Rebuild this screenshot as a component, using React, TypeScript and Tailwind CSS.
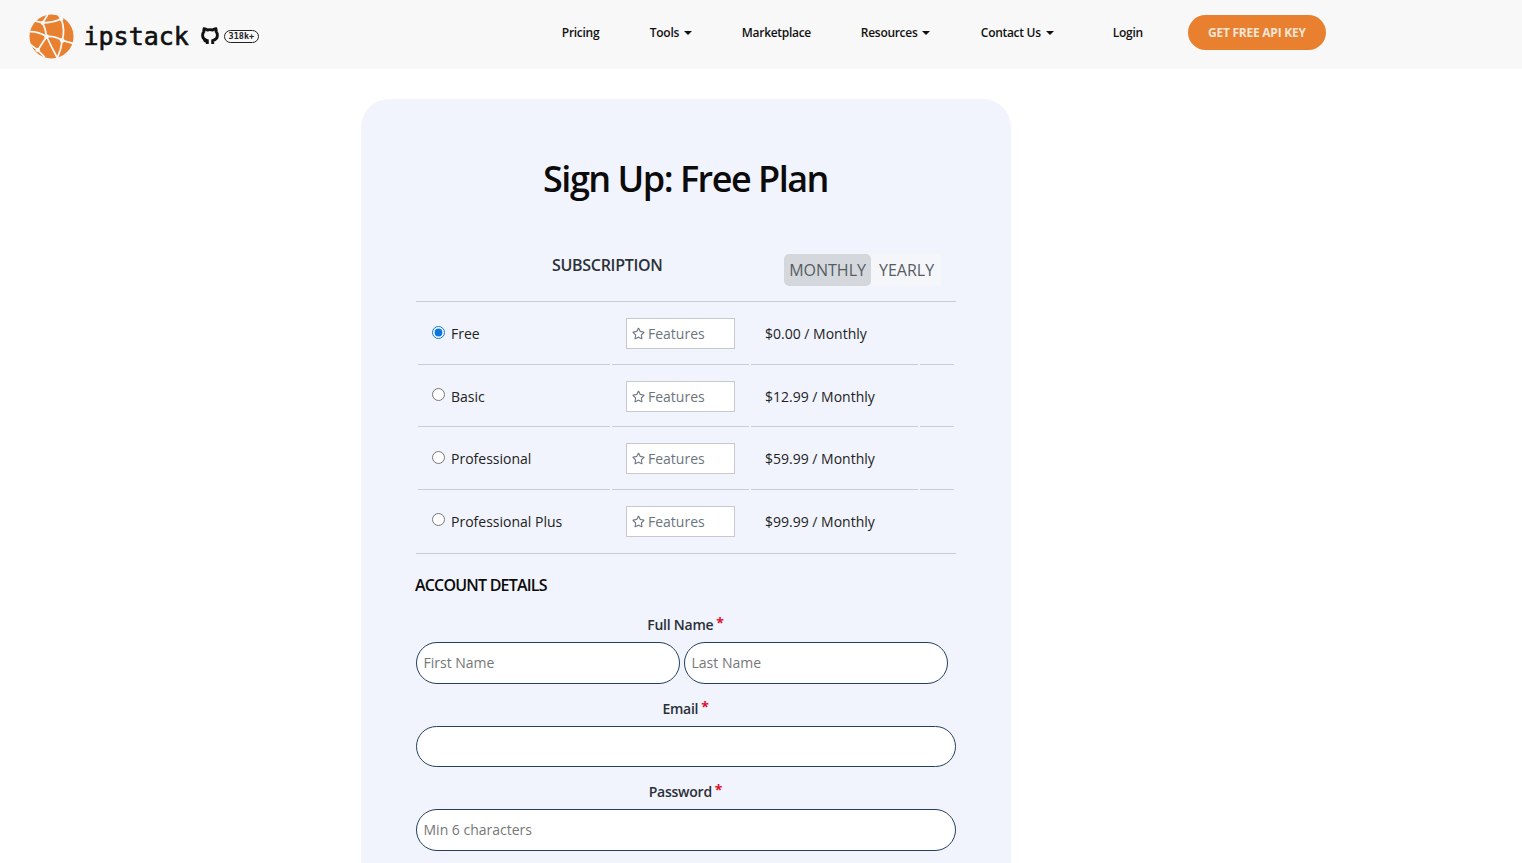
import { FaRegStar } from "react-icons/fa";

const plans = [
  { name: "Free", price: "$0.00 / Monthly", checked: true },
  { name: "Basic", price: "$12.99 / Monthly", checked: false },
  { name: "Professional", price: "$59.99 / Monthly", checked: false },
  { name: "Professional Plus", price: "$99.99 / Monthly", checked: false },
];

const Caret = () => (
  <span className="ml-[5px] inline-block border-x-[4px] border-t-[4px] border-x-transparent border-t-[#111]" />
);

const Logo = () => (
  <svg width="45" height="45" viewBox="0 0 46 46" className="mt-[4px] shrink-0">
    <circle cx="23" cy="23" r="22.5" fill="#e8802f" />
    <g stroke="#f8f8f8" strokeWidth="1.8" fill="none">
      <path d="M14 9 Q24 9 33 5 Q37 16 34 27 Q26 22 18 23 Q17 15 14 9" />
      <path d="M14 9 L19 1 M33 5 L30 1 M14 9 L6 7 M1 18 Q10 18 18 23 M18 23 L9 37 L1 31 M9 37 L16 44 M18 23 Q23 34 29 45 M34 27 Q33 36 29 45 M34 27 L45 30" />
    </g>
    <g fill="#f8f8f8">
      <circle cx="14" cy="9" r="2.2" />
      <circle cx="33" cy="5" r="2.2" />
      <circle cx="34" cy="27" r="2.4" />
      <circle cx="18" cy="23" r="2.4" />
      <circle cx="9" cy="37" r="2.2" />
    </g>
  </svg>
);

const GithubMark = () => (
  <svg width="18" height="18" viewBox="0 0 18 18" fill="none" stroke="#111" strokeWidth="2.9" className="ml-[12px] mt-[3px] shrink-0">
    <path d="M6.3 17 V13.6 C3.6 12.8 1.6 10.9 1.6 8.2 C1.6 6.8 2 5.6 2.9 4.6 C2.7 3.6 2.8 2.6 3.1 1.8 C4.4 1.9 5.5 2.4 6.4 3 A9 9 0 0 1 11.6 3 C12.5 2.4 13.6 1.9 14.9 1.8 C15.2 2.6 15.3 3.6 15.1 4.6 C16 5.6 16.4 6.8 16.4 8.2 C16.4 10.9 14.4 12.8 11.7 13.6 V17" />
    <path d="M6.3 14.8 C4.6 15.2 3.6 14.6 2.6 13.2" strokeWidth="1.6" />
  </svg>
);

const NavLink = ({ label, caret, className }: { label: string; caret?: boolean; className: string }) => (
  <a className={`flex items-center text-[12px] font-semibold tracking-[-0.3px] text-[#111] ${className}`}>
    {label}
    {caret && <Caret />}
  </a>
);

const Label = ({ text }: { text: string }) => (
  <label className="flex h-[26px] justify-center pr-[1px] text-[14px] font-semibold leading-[26px] tracking-[-0.25px] text-[#2a2f36]">
    {text}
    <span className="ml-[3px] -mt-[2px] text-[14px] font-bold text-[#e0102a]">*</span>
  </label>
);

const inputCls =
  "rounded-[21px] border border-[#24405f] bg-white px-[6.5px] pb-[2px] text-[14px] text-[#333] outline-none placeholder:text-[#777]";

export default function App() {
  return (
    <div className="h-[863px] overflow-hidden bg-white font-['Open_Sans','Noto_Sans',sans-serif] text-[#111]">
      <header className="flex h-[69px] items-center bg-[#f8f8f8] pl-[28.5px]">
        <Logo />
        <span className="ml-[10px] mt-[3px] font-['DejaVu_Sans_Mono',monospace] text-[25px] leading-none text-[#111] [-webkit-text-stroke:0.6px_#111]">
          ipstack
        </span>
        <GithubMark />
        <span className="ml-[5px] mt-[3px] w-[35px] rounded-full border border-[#222] text-center font-['DejaVu_Sans_Mono',monospace] text-[8.5px] font-bold leading-[11px] text-[#222]">
          318k+
        </span>
        <nav className="-mt-[4px] flex items-center">
          <NavLink label="Pricing" className="ml-[303px] w-[88px]" />
          <NavLink label="Tools" caret className="w-[92px]" />
          <NavLink label="Marketplace" className="w-[119px]" />
          <NavLink label="Resources" caret className="w-[120px]" />
          <NavLink label="Contact Us" caret className="w-[132px]" />
          <NavLink label="Login" className="w-[75px]" />
          <a className="flex h-[35px] w-[138px] items-center justify-center rounded-full bg-[#e8802f] text-[12px] font-bold tracking-[-0.25px] text-[#f5e6d8]">
            GET FREE API KEY
          </a>
        </nav>
      </header>

      <main className="ml-[361px] mt-[30px] w-[650px] rounded-[28px] bg-[#f1f4fd] px-[55px] pb-[40px] pt-[51px]">
        <h1 className="pr-[1px] text-center text-[36px] font-semibold leading-[58px] tracking-[-1.5px] text-[#0b0b0b]">
          Sign Up: Free Plan
        </h1>

        <div className="mt-[46px] flex h-[47px] items-start">
          <h2 className="ml-[136px] -mt-[1px] text-[16px] font-semibold leading-[24px] tracking-[-0.3px] text-[#2c3138]">SUBSCRIPTION</h2>
          <div className="ml-[121px] flex h-[32px] bg-[#f5f6fa] text-[16px] leading-[32px] text-[#555c63]">
            <span className="w-[87px] rounded-[5px] bg-[#d4d8dc] pl-[1px] text-center">MONTHLY</span>
            <span className="w-[70px] pl-[2px] text-center">YEARLY</span>
          </div>
        </div>

        <table className="w-[540px] table-fixed border-separate border-spacing-x-[2px] border-spacing-y-0 border-y border-[#c8ccd4] text-[14px]">
          <colgroup>
            <col className="w-[192px]" />
            <col className="w-[137px]" />
            <col className="w-[167px]" />
            <col />
          </colgroup>
          <tbody>
            {plans.map((p, i) => {
              const cell = i < 3 ? "h-[62.5px] border-b border-[#c8ccd4] pt-[2px]" : "h-[63.5px]";
              return (
                <tr key={p.name}>
                  <td className={cell}>
                    <label className="flex items-center pl-[14px] text-[#222]">
                      <input type="radio" name="plan" defaultChecked={p.checked} className="m-0 mb-[3px] mr-[6px] h-[13px] w-[13px] accent-[#0b75e0]" />
                      {p.name}
                    </label>
                  </td>
                  <td className={cell}>
                    <span className="ml-[14px] flex h-[31px] w-[109px] items-center border border-[#c6cad0] bg-white pl-[5px] text-[#6c757d]">
                      <FaRegStar className="mr-[3px] text-[13px]" />
                      Features
                    </span>
                  </td>
                  <td className={`${cell} pl-[14px] text-[#222]`}>{p.price}</td>
                  <td className={cell} />
                </tr>
              );
            })}
          </tbody>
        </table>

        <h2 className="-ml-[1px] mt-[19px] text-[16px] font-semibold leading-[24px] tracking-[-0.8px] text-[#0b0b0b]">ACCOUNT DETAILS</h2>

        <div className="mt-[15px] w-[540px]">
          <Label text="Full Name" />
          <div className="mt-[4px] flex gap-[4px]">
            <input placeholder="First Name" className={`${inputCls} h-[42px] w-[264px]`} />
            <input placeholder="Last Name" className={`${inputCls} h-[42px] w-[264px]`} />
          </div>
          <div className="mt-[12px]">
            <Label text="Email" />
          </div>
          <input className={`${inputCls} mt-[4px] h-[41px] w-[540px]`} />
          <div className="mt-[12px]">
            <Label text="Password" />
          </div>
          <input placeholder="Min 6 characters" className={`${inputCls} mt-[4px] h-[42px] w-[540px]`} />
        </div>
      </main>
    </div>
  );
}
